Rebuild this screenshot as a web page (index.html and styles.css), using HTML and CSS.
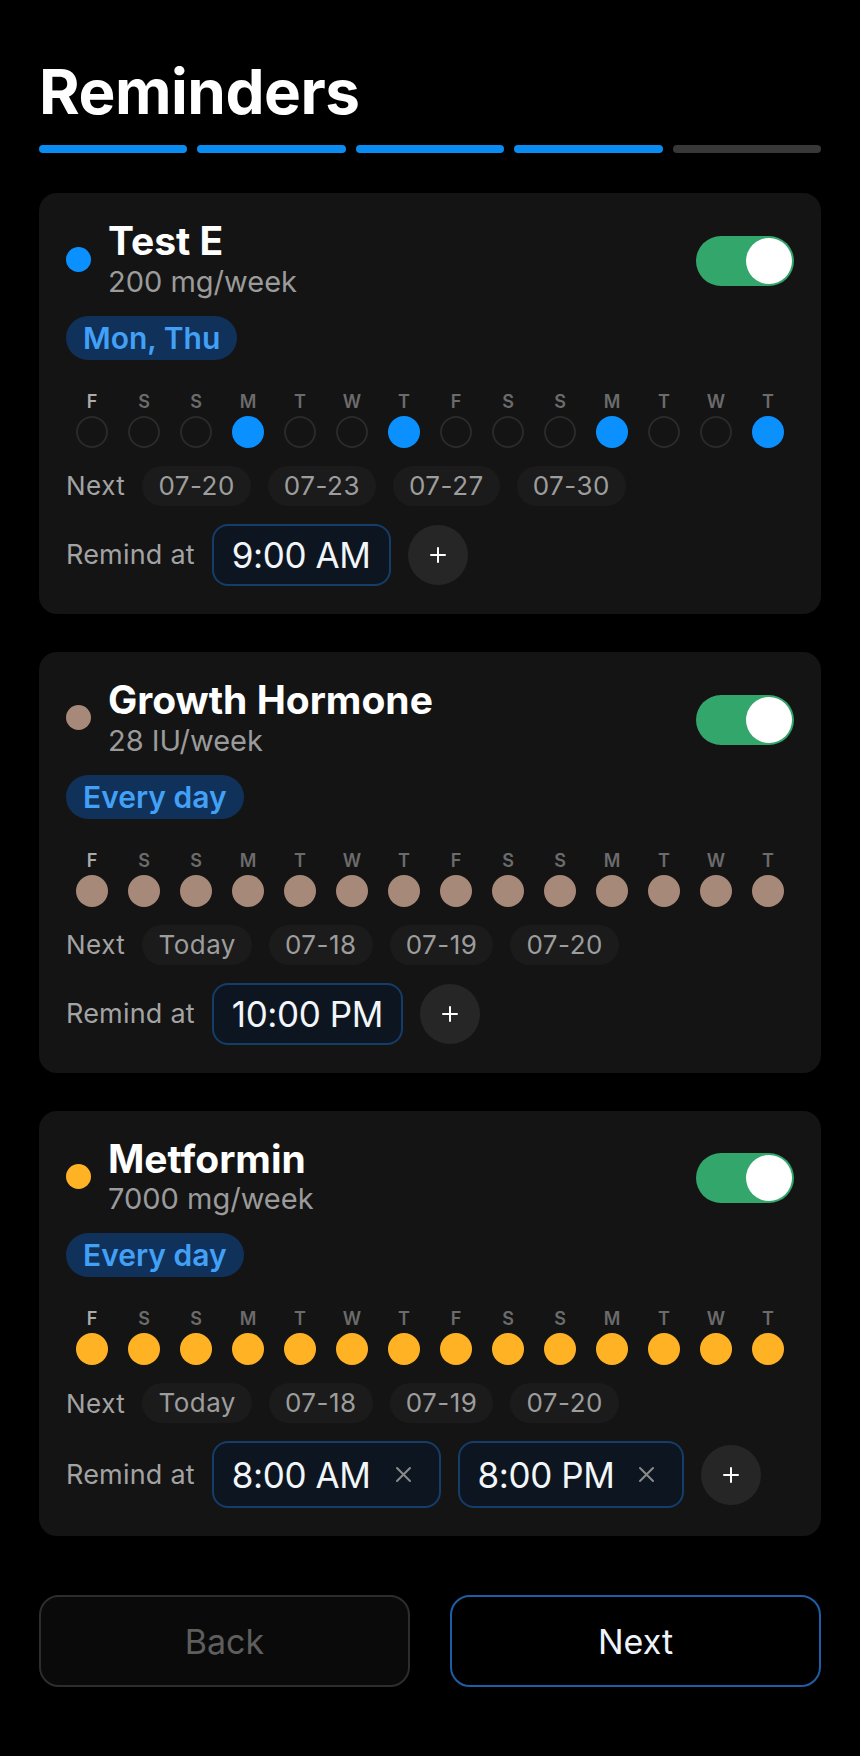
FILE: index.html
```html
<!DOCTYPE html>
<html lang="en">
<head>
  <meta charset="UTF-8">
  <meta name="viewport" content="width=device-width, initial-scale=1.0">
  <title>Reminders</title>
  <link rel="stylesheet" href="styles.css">
</head>
<body>
  <div class="page">
    <h1 class="title">Reminders</h1>

    <div class="progress"> <!-- step 4 of 5 -->
      <span></span><span></span><span></span><span></span><span class="todo"></span>
    </div>

    <div class="cards">
      <!-- Test E -->
      <div class="card blue">
        <div class="card-head">
          <div class="med">
            <div class="med-dot"></div>
            <div>
              <div class="med-name">Test E</div>
              <div class="med-dose">200 mg/week</div>
            </div>
          </div>
          <div class="toggle"><div class="knob"></div></div>
        </div>
        <div class="freq">Mon, Thu</div>
        <div class="days">
          <div class="day today"><span class="day-letter">F</span><span class="day-mark"></span></div>
          <div class="day"><span class="day-letter">S</span><span class="day-mark"></span></div>
          <div class="day"><span class="day-letter">S</span><span class="day-mark"></span></div>
          <div class="day"><span class="day-letter">M</span><span class="day-mark on"></span></div>
          <div class="day"><span class="day-letter">T</span><span class="day-mark"></span></div>
          <div class="day"><span class="day-letter">W</span><span class="day-mark"></span></div>
          <div class="day"><span class="day-letter">T</span><span class="day-mark on"></span></div>
          <div class="day"><span class="day-letter">F</span><span class="day-mark"></span></div>
          <div class="day"><span class="day-letter">S</span><span class="day-mark"></span></div>
          <div class="day"><span class="day-letter">S</span><span class="day-mark"></span></div>
          <div class="day"><span class="day-letter">M</span><span class="day-mark on"></span></div>
          <div class="day"><span class="day-letter">T</span><span class="day-mark"></span></div>
          <div class="day"><span class="day-letter">W</span><span class="day-mark"></span></div>
          <div class="day"><span class="day-letter">T</span><span class="day-mark on"></span></div>
        </div>
        <div class="next-row">
          <span class="row-label">Next</span>
          <span class="date-chip">07-20</span>
          <span class="date-chip">07-23</span>
          <span class="date-chip">07-27</span>
          <span class="date-chip">07-30</span>
        </div>
        <div class="remind-row">
          <span class="row-label">Remind at</span>
          <div class="time">9:00 AM</div>
          <button class="add"><svg width="16" height="16" viewBox="0 0 16 16"><path d="M8 1v14M1 8h14" stroke="#fff" stroke-width="2" stroke-linecap="round"/></svg></button>
        </div>
      </div>

      <!-- Growth Hormone -->
      <div class="card brown">
        <div class="card-head">
          <div class="med">
            <div class="med-dot"></div>
            <div>
              <div class="med-name">Growth Hormone</div>
              <div class="med-dose">28 IU/week</div>
            </div>
          </div>
          <div class="toggle"><div class="knob"></div></div>
        </div>
        <div class="freq">Every day</div>
        <div class="days">
          <div class="day today"><span class="day-letter">F</span><span class="day-mark on"></span></div>
          <div class="day"><span class="day-letter">S</span><span class="day-mark on"></span></div>
          <div class="day"><span class="day-letter">S</span><span class="day-mark on"></span></div>
          <div class="day"><span class="day-letter">M</span><span class="day-mark on"></span></div>
          <div class="day"><span class="day-letter">T</span><span class="day-mark on"></span></div>
          <div class="day"><span class="day-letter">W</span><span class="day-mark on"></span></div>
          <div class="day"><span class="day-letter">T</span><span class="day-mark on"></span></div>
          <div class="day"><span class="day-letter">F</span><span class="day-mark on"></span></div>
          <div class="day"><span class="day-letter">S</span><span class="day-mark on"></span></div>
          <div class="day"><span class="day-letter">S</span><span class="day-mark on"></span></div>
          <div class="day"><span class="day-letter">M</span><span class="day-mark on"></span></div>
          <div class="day"><span class="day-letter">T</span><span class="day-mark on"></span></div>
          <div class="day"><span class="day-letter">W</span><span class="day-mark on"></span></div>
          <div class="day"><span class="day-letter">T</span><span class="day-mark on"></span></div>
        </div>
        <div class="next-row">
          <span class="row-label">Next</span>
          <span class="date-chip">Today</span>
          <span class="date-chip">07-18</span>
          <span class="date-chip">07-19</span>
          <span class="date-chip">07-20</span>
        </div>
        <div class="remind-row">
          <span class="row-label">Remind at</span>
          <div class="time">10:00 PM</div>
          <button class="add"><svg width="16" height="16" viewBox="0 0 16 16"><path d="M8 1v14M1 8h14" stroke="#fff" stroke-width="2" stroke-linecap="round"/></svg></button>
        </div>
      </div>

      <!-- Metformin -->
      <div class="card yellow">
        <div class="card-head">
          <div class="med">
            <div class="med-dot"></div>
            <div>
              <div class="med-name">Metformin</div>
              <div class="med-dose">7000 mg/week</div>
            </div>
          </div>
          <div class="toggle"><div class="knob"></div></div>
        </div>
        <div class="freq">Every day</div>
        <div class="days">
          <div class="day today"><span class="day-letter">F</span><span class="day-mark on"></span></div>
          <div class="day"><span class="day-letter">S</span><span class="day-mark on"></span></div>
          <div class="day"><span class="day-letter">S</span><span class="day-mark on"></span></div>
          <div class="day"><span class="day-letter">M</span><span class="day-mark on"></span></div>
          <div class="day"><span class="day-letter">T</span><span class="day-mark on"></span></div>
          <div class="day"><span class="day-letter">W</span><span class="day-mark on"></span></div>
          <div class="day"><span class="day-letter">T</span><span class="day-mark on"></span></div>
          <div class="day"><span class="day-letter">F</span><span class="day-mark on"></span></div>
          <div class="day"><span class="day-letter">S</span><span class="day-mark on"></span></div>
          <div class="day"><span class="day-letter">S</span><span class="day-mark on"></span></div>
          <div class="day"><span class="day-letter">M</span><span class="day-mark on"></span></div>
          <div class="day"><span class="day-letter">T</span><span class="day-mark on"></span></div>
          <div class="day"><span class="day-letter">W</span><span class="day-mark on"></span></div>
          <div class="day"><span class="day-letter">T</span><span class="day-mark on"></span></div>
        </div>
        <div class="next-row">
          <span class="row-label">Next</span>
          <span class="date-chip">Today</span>
          <span class="date-chip">07-18</span>
          <span class="date-chip">07-19</span>
          <span class="date-chip">07-20</span>
        </div>
        <div class="remind-row">
          <span class="row-label">Remind at</span>
          <div class="time removable"><span>8:00 AM</span><svg class="remove" width="17" height="17" viewBox="0 0 17 17"><path d="M2 2l13 13M15 2L2 15" stroke="#8a8a8a" stroke-width="2" stroke-linecap="round"/></svg></div>
          <div class="time removable"><span>8:00 PM</span><svg class="remove" width="17" height="17" viewBox="0 0 17 17"><path d="M2 2l13 13M15 2L2 15" stroke="#8a8a8a" stroke-width="2" stroke-linecap="round"/></svg></div>
          <button class="add"><svg width="16" height="16" viewBox="0 0 16 16"><path d="M8 1v14M1 8h14" stroke="#fff" stroke-width="2" stroke-linecap="round"/></svg></button>
        </div>
      </div>
    </div>

    <div class="actions">
      <button class="btn">Back</button>
      <button class="btn primary">Next</button>
    </div>
  </div>
</body>
</html>
```

FILE: styles.css
```css
body {
  margin: 0;
  background: #000;
  color: #fff;
  font-family: Inter, "Noto Sans", sans-serif;
}

.page {
  padding: 55px 39px 40px;
}

.title {
  margin: 0;
  font-size: 62px;
  font-weight: 700;
  line-height: 1.2;
  letter-spacing: -0.5px;
}

/* barra de progresso */
.progress {
  display: flex;
  gap: 10px;
  margin-top: 16px;
}

.progress span {
  flex: 1;
  height: 8px;
  border-radius: 4px;
  background: #0a8df2;
}

.progress span.todo {
  background: #383838;
}

.cards {
  display: flex;
  flex-direction: column;
  gap: 38px;
  margin-top: 40px;
}

.card {
  background: #141414;
  border-radius: 18px;
  padding: 25px 27px 28px;
}

.card.blue { --accent: #0a91ff; }
.card.brown { --accent: #a68978; }
.card.yellow { --accent: #ffb224; }

.card-head {
  display: flex;
  align-items: center;
  justify-content: space-between;
}

.med {
  display: flex;
  align-items: center;
  gap: 17px;
}

.med-dot {
  width: 25px;
  height: 25px;
  border-radius: 50%;
  background: var(--accent);
}

.med-name {
  font-size: 39px;
  font-weight: 700;
  line-height: 1.2;
}

.med-dose {
  font-size: 29px;
  line-height: 1.2;
  color: #9b9b9b;
}

.toggle {
  display: flex;
  justify-content: flex-end;
  box-sizing: border-box;
  width: 98px;
  height: 50px;
  margin-top: 4px;
  padding: 2px;
  border-radius: 25px;
  background: #33a66b;
}

.knob {
  width: 46px;
  height: 46px;
  border-radius: 50%;
  background: #fff;
}

.freq {
  width: fit-content;
  margin-top: 16px;
  height: 44px;
  line-height: 44px;
  padding: 0 17px;
  border-radius: 22px;
  background: #10315a;
  color: #42a0f6;
  font-size: 30px;
  font-weight: 600;
}

/* linha dos dias */
.days {
  display: grid;
  grid-template-columns: repeat(14, 1fr);
  margin-top: 32px;
}

.day {
  display: flex;
  flex-direction: column;
  align-items: center;
  gap: 4px;
}

.day-letter {
  font-size: 18px;
  font-weight: 600;
  line-height: 20px;
  color: #6b6b6b;
}

.day.today .day-letter {
  color: #ababab;
}

.day-mark {
  box-sizing: border-box;
  width: 32px;
  height: 32px;
  border-radius: 50%;
  border: 2px solid #2a2a2a;
}

.day-mark.on {
  border: none;
  background: var(--accent);
}

.next-row,
.remind-row {
  display: flex;
  align-items: center;
  gap: 17px;
  margin-top: 18px;
}

.row-label {
  font-size: 26px;
  letter-spacing: 0.5px;
  color: #a3a3a3;
}

.remind-row .row-label {
  font-size: 27px;
  letter-spacing: 0.2px;
}

.date-chip {
  height: 40px;
  line-height: 40px;
  padding: 0 16px;
  border-radius: 20px;
  background: #1b1b1b;
  font-size: 26px;
  letter-spacing: 0.5px;
  color: #9d9d9d;
}

.time {
  display: flex;
  align-items: center;
  box-sizing: border-box;
  height: 62px;
  padding: 0 18px;
  border: 2px solid #153d69;
  border-radius: 16px;
  background: #0d1620;
  font-size: 35px;
  letter-spacing: -0.4px;
  color: #f2f6fa;
}

.time.removable {
  height: 67px;
  gap: 24px;
  padding-right: 27px;
}

.add {
  display: flex;
  align-items: center;
  justify-content: center;
  width: 60px;
  height: 60px;
  padding: 0;
  border: none;
  border-radius: 50%;
  background: #262626;
}

.actions {
  display: grid;
  grid-template-columns: 1fr 1fr;
  gap: 40px;
  margin-top: 59px;
}

.btn {
  height: 92px;
  box-sizing: border-box;
  border: 2px solid #2d2d2d;
  border-radius: 20px;
  background: #0a0a0a;
  color: #5e5e5e;
  font-family: inherit;
  font-size: 34px;
}

.btn.primary {
  border-color: #1d5ea5;
  background: #000;
  color: #eef4fa;
}
```
